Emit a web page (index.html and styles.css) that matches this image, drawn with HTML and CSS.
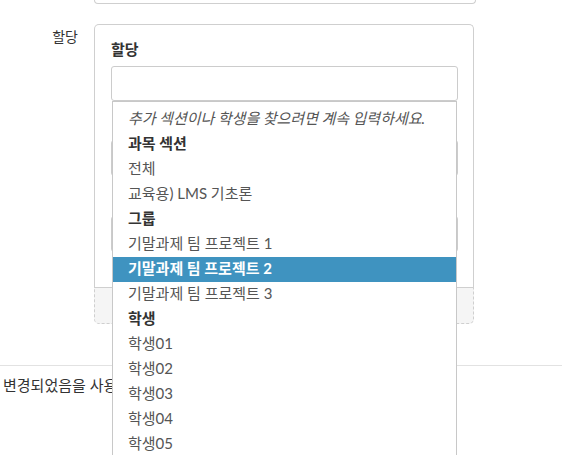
FILE: index.html
```html
<!DOCTYPE html>
<html lang="ko">
<head>
<meta charset="utf-8">
<title>할당</title>
<link rel="stylesheet" href="styles.css">
</head>
<body>
<div class="page">
  <div class="prev-card"></div>

  <div class="assign-row">
    <div class="row-label">할당</div>
    <div class="card">
      <div class="card-body">
        <h3 class="card-title">할당</h3>
        <div class="combo">
          <div class="combo-input"></div>
          <ul class="menu">
            <li class="menu-hint">추가 섹션이나 학생을 찾으려면 계속 입력하세요.</li>
            <li class="menu-group">과목 섹션</li>
            <li class="menu-item">전체</li>
            <li class="menu-item">교육용) LMS 기초론</li>
            <li class="menu-group">그룹</li>
            <li class="menu-item">기말과제 팀 프로젝트 1</li>
            <li class="menu-item is-active">기말과제 팀 프로젝트 2</li>
            <li class="menu-item">기말과제 팀 프로젝트 3</li>
            <li class="menu-group">학생</li>
            <li class="menu-item">학생01</li>
            <li class="menu-item">학생02</li>
            <li class="menu-item">학생03</li>
            <li class="menu-item">학생04</li>
            <li class="menu-item">학생05</li>
            <li class="menu-item">학생06</li>
            <li class="menu-item">학생07</li>
          </ul>
        </div>
        <div class="field field-first"></div>
        <div class="field field-second"></div>
      </div>
      <div class="card-foot"></div>
    </div>
  </div>

  <div class="divider"></div>
  <p class="notice">변경되었음을 사용자에게 알림</p>
</div>
</body>
</html>
```

FILE: styles.css
```css
html, body {
  margin: 0;
  padding: 0;
  overflow: hidden;
  background: #fff;
}

.page {
  width: 562px;
  height: 455px;
  overflow: hidden;
  font-family: Lato, "Noto Sans CJK KR", sans-serif;
  font-size: 14px;
  color: #333;
}

.prev-card {
  margin-left: 94px;
  width: 380px;
  height: 3px;
  box-sizing: content-box;
  border: 1px solid #cfcfcf;
  border-top: none;
  border-radius: 0 0 5px 5px;
}

.assign-row {
  display: flex;
  align-items: flex-start;
  gap: 16px;
  margin-top: 20px;
}

.row-label {
  width: 78px;
  text-align: right;
  line-height: 20px;
  padding-top: 3px;
  color: #333;
}

.card {
  width: 380px;
}

.card-body {
  position: relative;
  border: 1px solid #cfcfcf;
  border-bottom: none;
  border-radius: 5px 5px 0 0;
  padding: 13px 15px 35px 16px;
}

.card-title {
  margin: 0 0 6px 0;
  font-size: 15px;
  font-weight: bold;
  line-height: 22px;
  color: #333;
}

.combo {
  position: relative;
  width: 347px;
}

.combo-input {
  height: 33px;
  border: 1px solid #cccccc;
  border-radius: 3px;
  background: #fff;
}

.menu {
  position: absolute;
  top: 100%;
  left: 1px;
  right: 1px;
  margin: 0;
  padding: 5px 0 0 0;
  list-style: none;
  background: #fff;
  border: 1px solid #c8c8c8;
  z-index: 5;
}

.menu li {
  height: 22px;
  line-height: 22px;
  padding: 0 0 3px 15px;
  font-size: 15px;
  white-space: nowrap;
}

.menu-hint {
  font-style: italic;
  color: #555;
}

.menu-group {
  font-weight: bold;
  color: #333;
}

.menu-item {
  color: #555;
}

.menu-item.is-active {
  background: #3f93c0;
  color: #fff;
  font-weight: bold;
}

.field {
  width: 345px;
  height: 34px;
  border: 1px solid #cccccc;
  border-radius: 3px;
}

.field-first {
  margin-top: 39px;
}

.field-second {
  margin-top: 40px;
}

.card-foot {
  height: 35px;
  background: #f5f5f5;
  border: 1px dashed #cfcfcf;
  border-top: 1px solid #cfcfcf;
  border-radius: 0 0 5px 5px;
}

.divider {
  margin-top: 41px;
  height: 1px;
  background: #e2e2e2;
}

.notice {
  margin: 9px 0 0 0;
  padding-left: 3px;
  font-size: 15px;
  line-height: 20px;
  color: #333;
  white-space: nowrap;
}
```
